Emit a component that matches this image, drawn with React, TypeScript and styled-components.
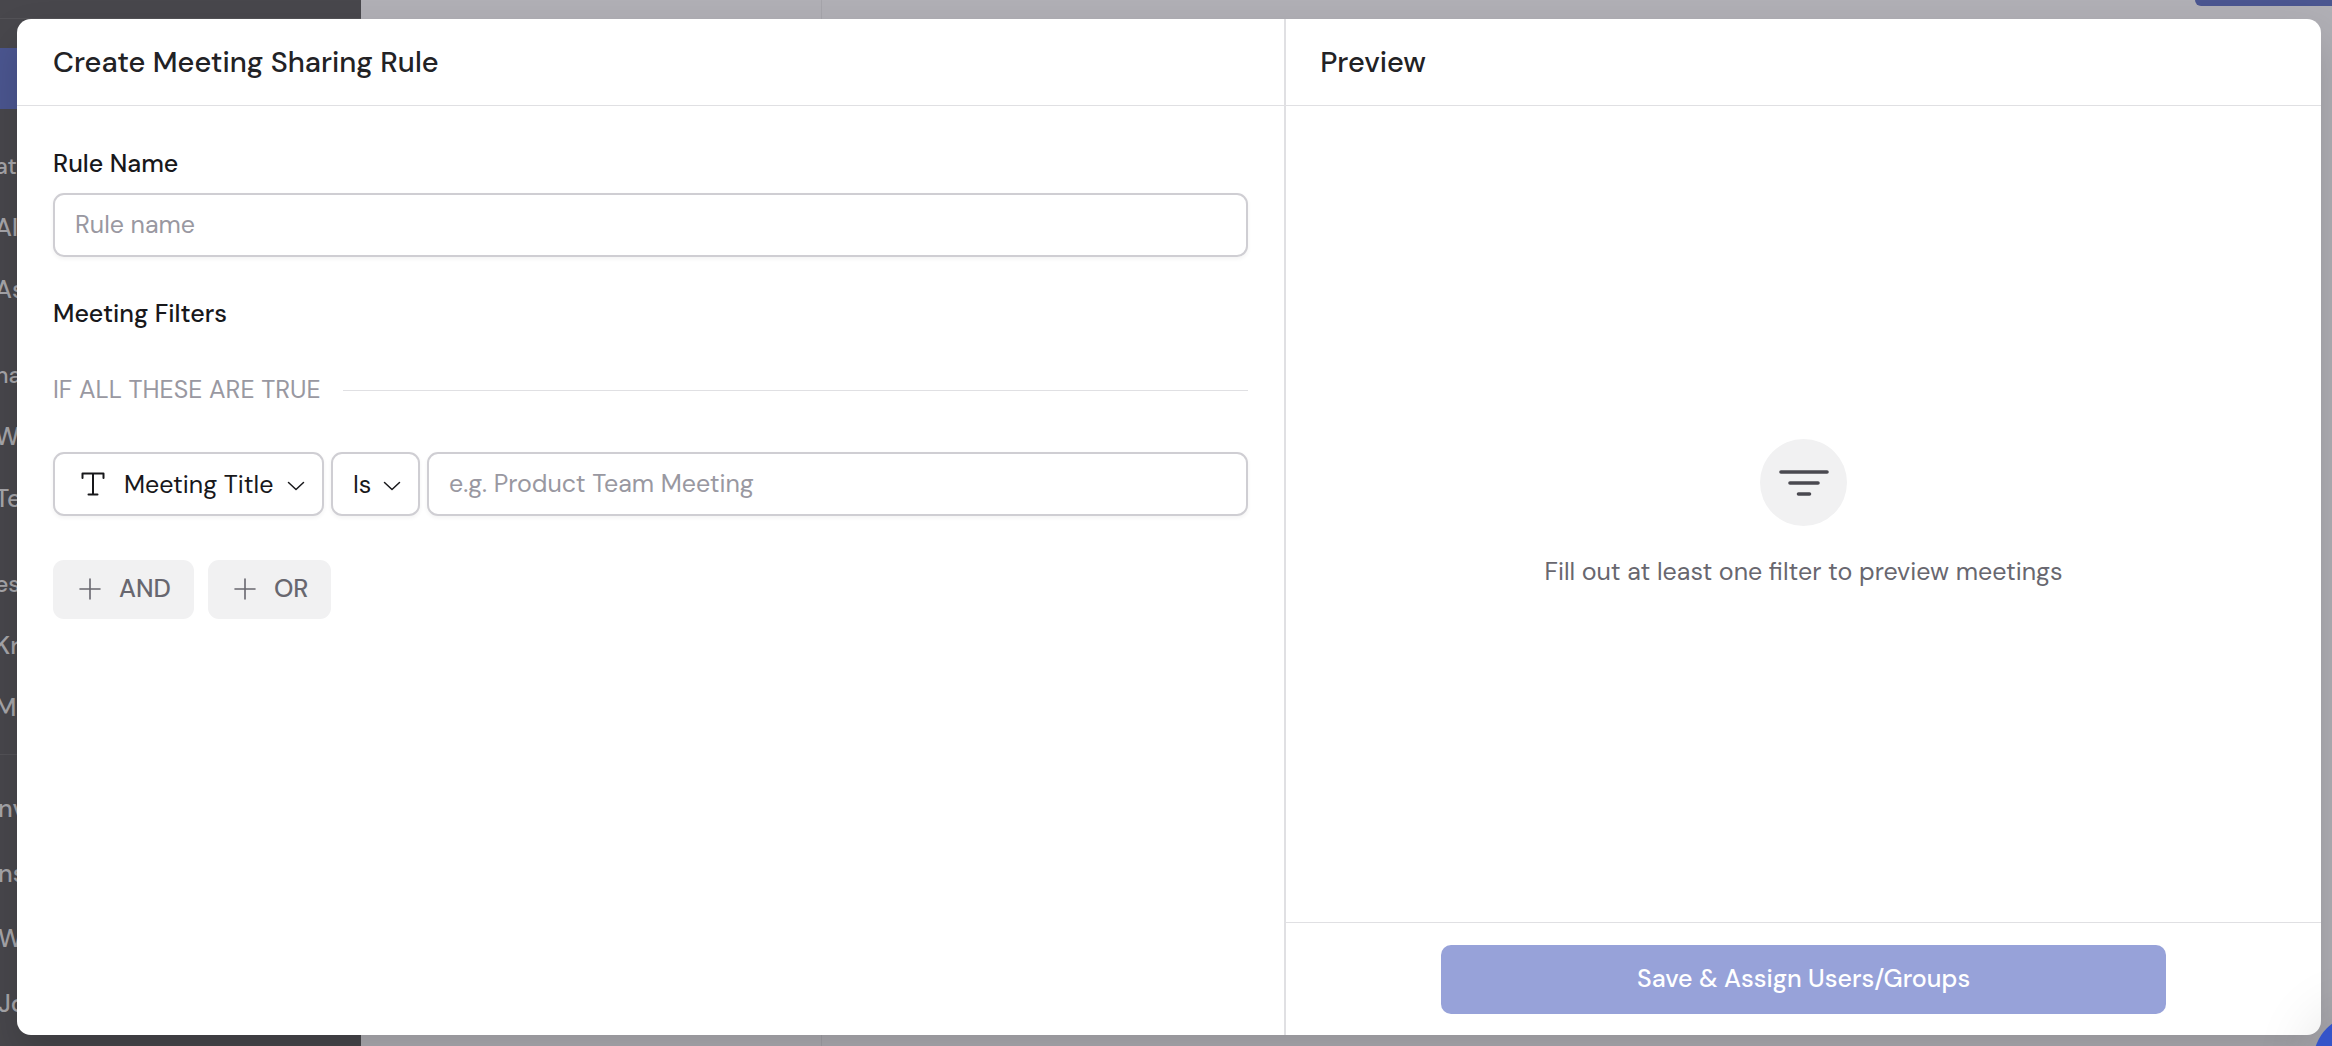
import React, { useState } from "react";
import styled, { createGlobalStyle, css } from "styled-components";

const GlobalStyle = createGlobalStyle`
  *, *::before, *::after { box-sizing: border-box; }
  body { margin: 0; overflow: hidden; }
  body, button, input, select { font-family: "DM Sans", Inter, "Liberation Sans", sans-serif; }
  h2, p { margin: 0; }
`;

const Page = styled.div`
  position: relative;
  min-height: 100vh;
  overflow: hidden;
  color: #18181b;
`;

/* Dimmed application behind the dialog */
const Backdrop = styled.div`
  display: grid;
  grid-template-columns: 361px 461px 1fr;
  height: 100vh;
  background: #b0afb5;
`;

const Sidebar = styled.nav`
  display: flex;
  flex-direction: column;
  overflow: hidden;
  background: #48474c;
  color: #a7a6aa;
  font-size: 25px;
`;

const SidebarTop = styled.div`
  height: 19px;
  flex: none;
  border-bottom: 1px solid #535257;
`;

const SidebarActive = styled.div`
  height: 61px;
  flex: none;
  margin: 29px 0 3px;
  background: #4b5690;
`;

const SidebarGroup = styled.div`
  display: flex;
  flex-direction: column;
  padding-top: 23px;
  margin-left: -5px;
`;

const SidebarLabel = styled.span`
  height: 62px;
  line-height: 62px;
  font-size: 23px;
  font-weight: 500;
`;

const SidebarItem = styled.span<{ $tall?: boolean }>`
  height: ${({ $tall }) => ($tall ? 65 : 62)}px;
  line-height: ${({ $tall }) => ($tall ? 65 : 62)}px;
  font-weight: 500;
  white-space: nowrap;
`;

const SidebarFooter = styled.div`
  display: flex;
  flex-direction: column;
  margin: 15px 0 0 -2px;
  padding-top: 21px;
  border-top: 1px solid #535257;
`;

const ListPane = styled.div`
  border-right: 1px solid #a5a4aa;
`;

const MainPane = styled.div`
  display: flex;
  justify-content: flex-end;
  align-items: flex-start;
`;

const PrimaryStub = styled.div`
  width: 137px;
  height: 6px;
  border-radius: 0 0 0 9px;
  background: #4b5690;
`;

const Dialog = styled.section`
  position: absolute;
  inset: 19px 11px 11px 17px;
  display: grid;
  grid-template-columns: 55fr 45fr;
  overflow: hidden;
  border-radius: 14px;
  background: #fff;
`;

const DialogShadow = styled.div`
  position: absolute;
  inset: 19px 11px 11px 17px;
  border-radius: 14px;
  box-shadow: 0 20px 40px rgba(0, 0, 0, 0.16);
`;

const ChatBubble = styled.div`
  position: absolute;
  right: -77px;
  bottom: -64px;
  width: 96px;
  height: 96px;
  border-radius: 50%;
  background: #3454c9;
  box-shadow: 0 2px 64px rgba(0, 0, 0, 0.14);
`;

const Column = styled.div<{ $divided?: boolean }>`
  display: flex;
  flex-direction: column;
  min-width: 0;
  ${({ $divided }) => $divided && css`border-left: 2px solid #e0e0e3;`}
`;

const Header = styled.header`
  display: flex;
  align-items: center;
  height: 87px;
  padding: 0 34px 0 36px;
  border-bottom: 1px solid #e0e0e3;
`;

const PreviewHeader = styled(Header)`
  padding: 0 34px;
`;

const Title = styled.h2`
  font-size: 29px;
  line-height: 36px;
  font-weight: 500;
  color: #222225;
`;

const Form = styled.form`
  display: flex;
  flex-direction: column;
  padding: 40px 36px;
`;

const FieldLabel = styled.label`
  font-size: 25px;
  line-height: 36px;
  font-weight: 500;
`;

const SectionTitle = styled.h2`
  margin-top: 39px;
  font-size: 25px;
  line-height: 36px;
  font-weight: 500;
`;

const control = css`
  height: 64px;
  border: 2px solid #cfced3;
  border-radius: 11px;
  background: #fff;
  box-shadow: 0 2px 4px rgba(0, 0, 0, 0.05);
`;

const TextInput = styled.input`
  ${control}
  flex: 1;
  min-width: 0;
  padding: 0 20px 2px;
  font-size: 25px;
  color: #18181b;
  outline: none;
  &::placeholder { color: #9998a1; opacity: 1; }
`;

const NameRow = styled.div`
  display: flex;
  margin-top: 11px;
`;

const Condition = styled.div`
  display: flex;
  align-items: center;
  gap: 22px;
  margin-top: 40px;
  color: #9998a1;
  font-size: 25px;
  line-height: 36px;
  &::after {
    content: "";
    flex: 1;
    height: 1px;
    background: #e0e0e3;
  }
`;

const FilterRow = styled.div`
  display: flex;
  gap: 7px;
  margin-top: 44px;
`;

const SelectBox = styled.div<{ $width: number }>`
  ${control}
  display: flex;
  align-items: center;
  flex: none;
  width: ${({ $width }) => $width}px;
  padding: 0 17px 0 20px;
`;

const Select = styled.select`
  appearance: none;
  flex: 1;
  min-width: 0;
  height: 100%;
  padding: 0;
  border: 0;
  background: transparent;
  color: #18181b;
  font-size: 25px;
  outline: none;
`;

const TypeIcon = styled.svg`
  width: 24px;
  height: 24px;
  flex: none;
  margin: 0 19px 0 6px;
`;

const Chevron = styled.svg`
  width: 18px;
  height: 10px;
  flex: none;
  margin-top: 3px;
  pointer-events: none;
`;

const Actions = styled.div`
  display: flex;
  gap: 14px;
  margin-top: 44px;
`;

const AddButton = styled.button`
  display: flex;
  align-items: center;
  gap: 18px;
  height: 59px;
  padding: 0 23px 2px 26px;
  border: 0;
  border-radius: 11px;
  background: #f1f1f2;
  color: #68676f;
  font-size: 25px;
  font-weight: 500;
`;

const PlusIcon = styled.svg`
  width: 22px;
  height: 22px;
`;

const EmptyState = styled.div`
  flex: 1;
  display: flex;
  flex-direction: column;
  align-items: center;
  justify-content: center;
  gap: 28px;
  color: #68676f;
  font-size: 25px;
  line-height: 36px;
`;

const FilterBadge = styled.div`
  display: grid;
  place-items: center;
  width: 87px;
  height: 87px;
  border-radius: 50%;
  background: #f1f1f2;
`;

const Footer = styled.footer`
  display: flex;
  justify-content: center;
  padding: 22px 0 21px;
  border-top: 1px solid #e0e0e3;
`;

const SaveButton = styled.button`
  width: 70%;
  height: 69px;
  padding: 0 0 2px;
  border: 0;
  border-radius: 10px;
  background: #97a2d9;
  color: #fff;
  font-size: 25px;
  font-weight: 500;
`;

const groups = [
  ["at", "Al", "As"],
  ["na", "W", "Te"],
  ["es", "Kr", "Me"],
];
const footerItems = ["nv", "ns", "W", "Jo"];

const ChevronDown = () => (
  <Chevron viewBox="0 0 18 10" fill="none" stroke="#18181b" strokeWidth="1.5" strokeLinecap="round" strokeLinejoin="round">
    <path d="M1.500 1.500 9 8.500l7.500-7" />
  </Chevron>
);

const Plus = () => (
  <PlusIcon viewBox="0 0 22 22" stroke="#68676f" strokeWidth="1.6" strokeLinecap="round">
    <path d="M11 1v20M1 11h20" />
  </PlusIcon>
);

export default function App() {
  const [name, setName] = useState("");
  const [value, setValue] = useState("");

  return (
    <Page>
      <GlobalStyle />
      <Backdrop aria-hidden="true">
        <Sidebar>
          <SidebarTop />
          <SidebarActive />
          {groups.map(([label, ...items]) => (
            <SidebarGroup key={label}>
              <SidebarLabel>{label}</SidebarLabel>
              {items.map((item) => (
                <SidebarItem key={item}>{item}</SidebarItem>
              ))}
            </SidebarGroup>
          ))}
          <SidebarFooter>
            {footerItems.map((item) => (
              <SidebarItem key={item} $tall>{item}</SidebarItem>
            ))}
          </SidebarFooter>
        </Sidebar>
        <ListPane />
        <MainPane>
          <PrimaryStub />
        </MainPane>
      </Backdrop>

      <DialogShadow />
      <Dialog role="dialog" aria-labelledby="dialog-title">
        <Column>
          <Header>
            <Title id="dialog-title">Create Meeting Sharing Rule</Title>
          </Header>
          <Form onSubmit={(e) => e.preventDefault()}>
            <FieldLabel htmlFor="rule-name">Rule Name</FieldLabel>
            <NameRow>
              <TextInput id="rule-name" placeholder="Rule name" value={name} onChange={(e) => setName(e.target.value)} />
            </NameRow>
            <SectionTitle>Meeting Filters</SectionTitle>
            <Condition>IF ALL THESE ARE TRUE</Condition>
            <FilterRow>
              <SelectBox $width={271}>
                <TypeIcon viewBox="0 0 24 24" fill="none" stroke="#18181b" strokeWidth="2" strokeLinecap="round" strokeLinejoin="round">
                  <path d="M1.500 6V1.500h21V6M12 1.500v21M7.500 22.500h9" />
                </TypeIcon>
                <Select aria-label="Filter field" defaultValue="title">
                  <option value="title">Meeting Title</option>
                </Select>
                <ChevronDown />
              </SelectBox>
              <SelectBox $width={89}>
                <Select aria-label="Comparison" defaultValue="is">
                  <option value="is">Is</option>
                </Select>
                <ChevronDown />
              </SelectBox>
              <TextInput
                aria-label="Filter value"
                placeholder="e.g. Product Team Meeting"
                value={value}
                onChange={(e) => setValue(e.target.value)}
              />
            </FilterRow>
            <Actions>
              <AddButton type="button"><Plus />AND</AddButton>
              <AddButton type="button"><Plus />OR</AddButton>
            </Actions>
          </Form>
        </Column>

        <Column $divided>
          <PreviewHeader>
            <Title>Preview</Title>
          </PreviewHeader>
          <EmptyState>
            <FilterBadge>
              <svg width="50" height="28" viewBox="0 0 50 28" stroke="#4a4950" strokeWidth="3.6" strokeLinecap="round">
                <path d="M2 4h46M11 15h28M19.500 26h11" />
              </svg>
            </FilterBadge>
            <p>Fill out at least one filter to preview meetings</p>
          </EmptyState>
          <Footer>
            <SaveButton type="button">Save &amp; Assign Users/Groups</SaveButton>
          </Footer>
        </Column>
      </Dialog>
      <ChatBubble />
    </Page>
  );
}
